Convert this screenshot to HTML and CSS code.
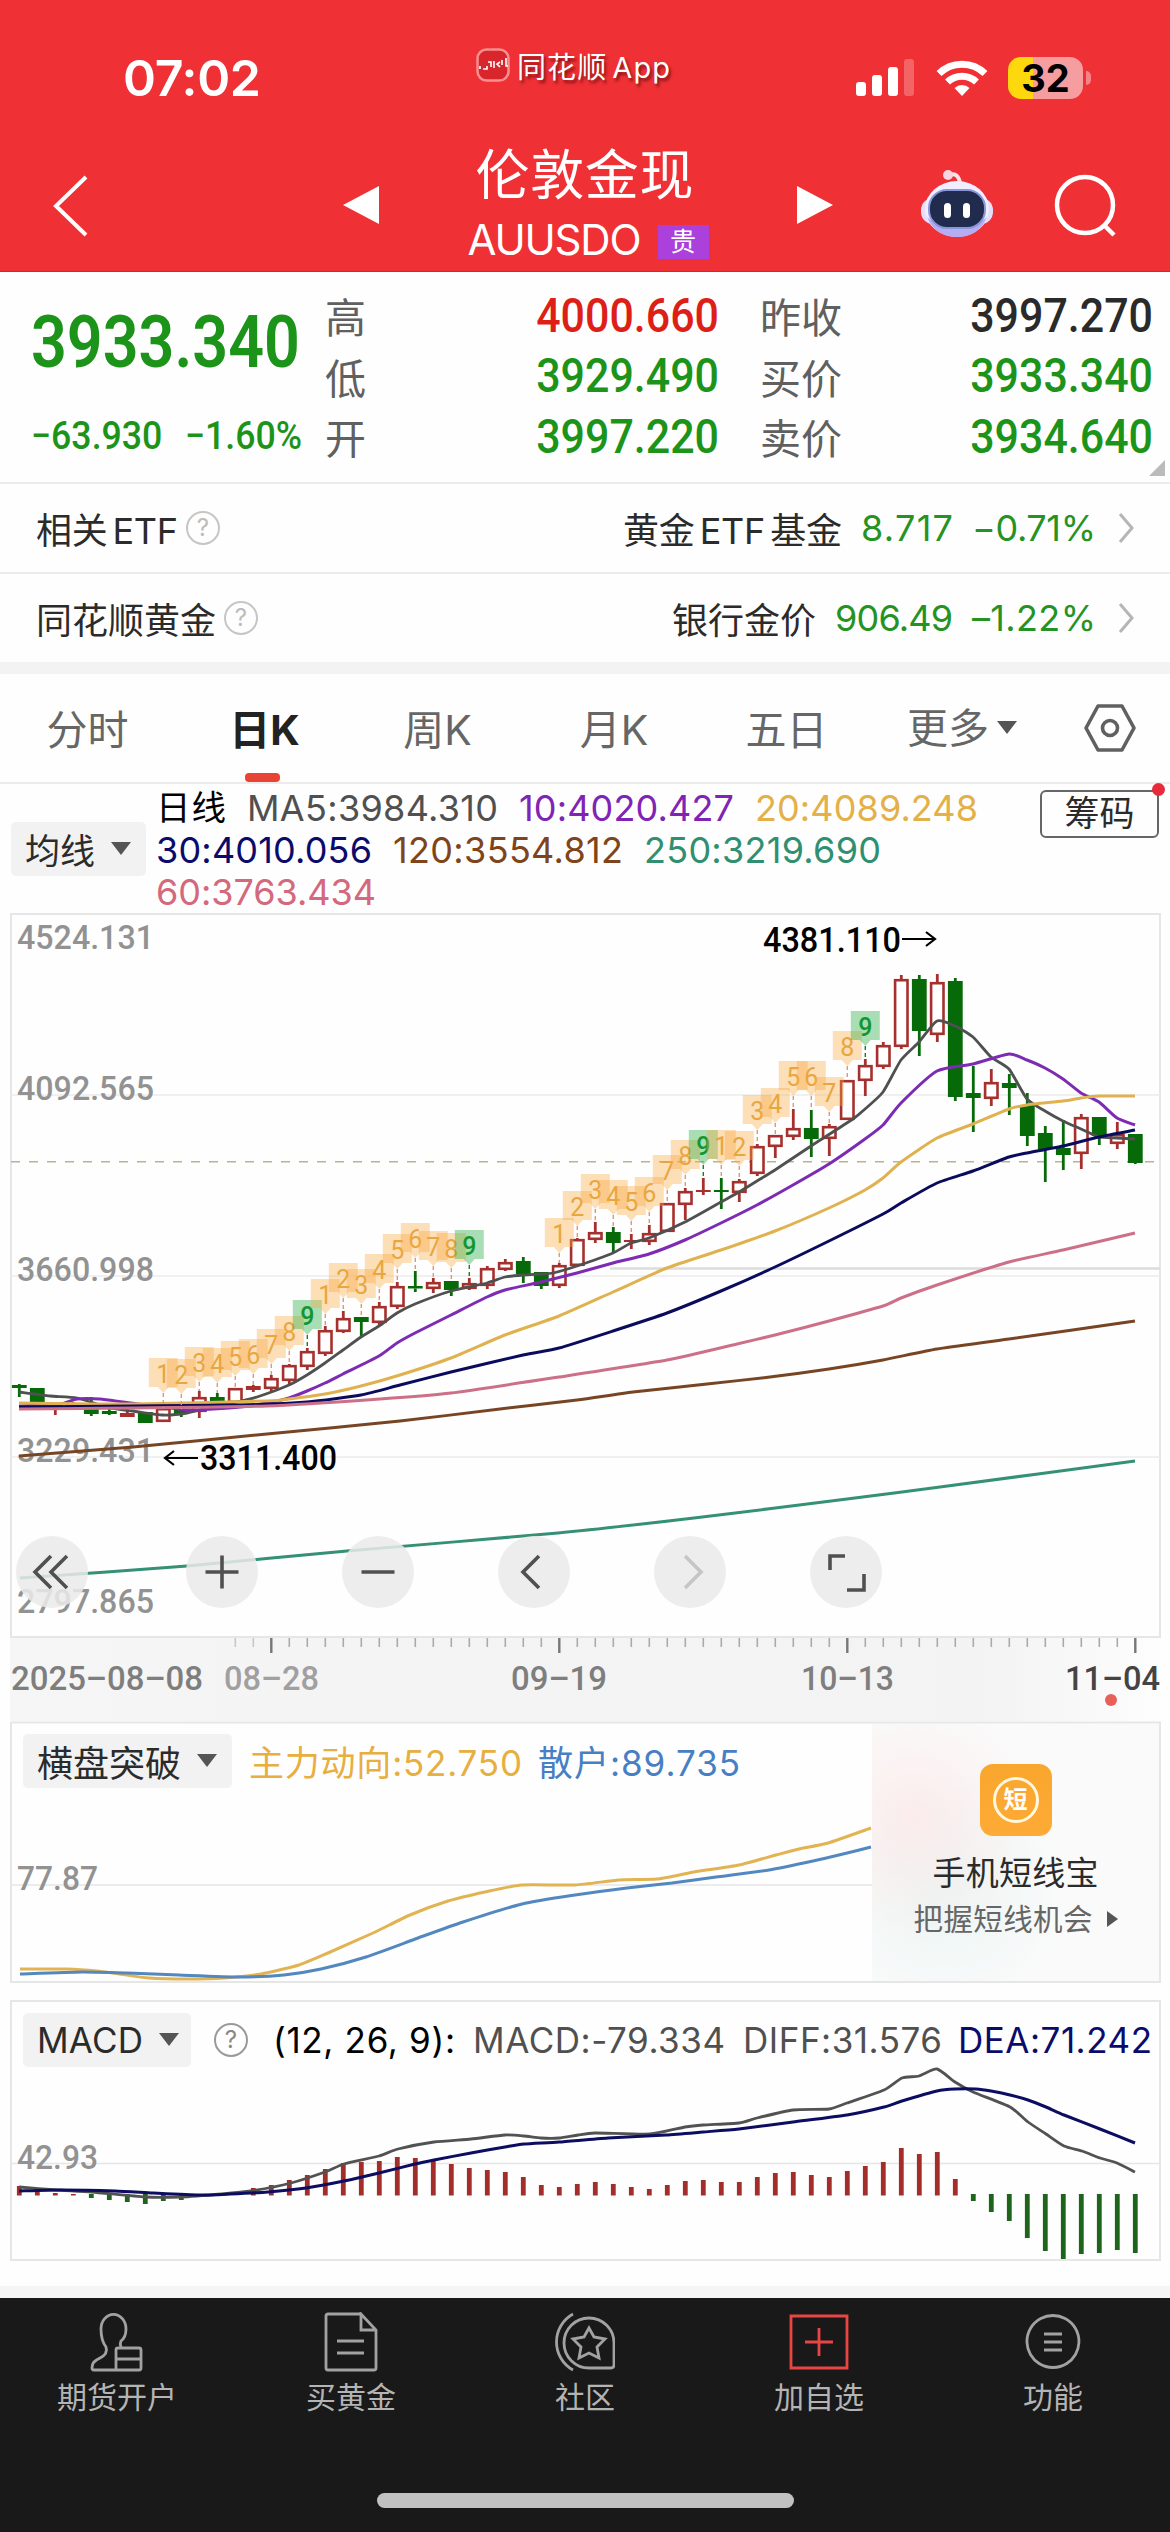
FILE: index.html
```html
<!DOCTYPE html>
<html lang="zh-CN">
<head>
<meta charset="utf-8">
<title>伦敦金现 AUUSDO</title>
<link rel="stylesheet" href="styles.css">
</head>
<body>
<header class="header">
  <div class="status">
    <span class="time" data-w="138">07:02</span>
    <span class="source">
      <svg width="34" height="34" viewBox="0 0 34 34"><rect x="1.5" y="1.5" width="31" height="31" rx="9" fill="#d9262c" stroke="#fa8f90" stroke-width="2.5"/><path d="M4 21v-3M7 21h4v-3M12 14h3v5M18 13v7M24 14l-3 2 3 3M26 12v5M30 10v8h2" fill="none" stroke="#fff" stroke-width="1.6"/></svg>
      <span class="app" data-w="153">同花顺<em>App</em></span>
    </span>
    <svg class="signal" width="60" height="38" viewBox="0 0 60 38" fill="#fff"><rect x="1" y="23" width="10" height="14" rx="3"/><rect x="17" y="16" width="10" height="21" rx="3"/><rect x="33" y="8" width="10" height="29" rx="3"/><rect x="49" y="0" width="10" height="37" rx="3" opacity=".25"/></svg>
    <svg class="wifi" width="52" height="38" viewBox="0 0 52 38" fill="none" stroke="#fff" stroke-width="7"><path d="M3 14.5a33 33 0 0 1 46 0"/><path d="M11.5 23a21 21 0 0 1 29 0"/><path d="M26 37l-7.5-8a11 11 0 0 1 15 0z" fill="#fff" stroke="none"/></svg>
    <div class="battery"><span>32</span></div>
  </div>
  <div class="titlebar">
    <svg class="back" width="36" height="62" viewBox="0 0 36 62"><path d="M33 2L3 31l30 29" fill="none" stroke="#fff" stroke-width="4"/></svg>
    <svg class="prev" width="36" height="40" viewBox="0 0 36 40"><path d="M36 1v38L0 20z" fill="#fff"/></svg>
    <div class="title">
      <h1 data-w="218">伦敦金现</h1>
      <div class="code"><span data-w="174">AUUSDO</span><i>贵</i></div>
    </div>
    <svg class="next" width="36" height="40" viewBox="0 0 36 40"><path d="M0 1v38l36-19z" fill="#fff"/></svg>
    <svg class="robot" width="74" height="70" viewBox="0 0 74 70">
      <path d="M30 6q8-3 10 8" fill="none" stroke="#fbe3ea" stroke-width="4"/><circle cx="28" cy="6" r="5" fill="#f9d5de"/>
      <rect x="1" y="29" width="72" height="26" rx="12" fill="#e4defb"/>
      <ellipse cx="37" cy="40" rx="32" ry="28" fill="#f0eeff"/><path d="M7 48q8 20 30 20t30-20q-12 12-30 12T7 48z" fill="#b6acf3"/>
      <rect x="9" y="21" width="56" height="38" rx="18" fill="#202b4d" stroke="#8796d8" stroke-width="2"/>
      <rect x="24" y="34" width="7" height="15" rx="3.5" fill="#fff"/><rect x="43" y="34" width="7" height="15" rx="3.5" fill="#fff"/>
    </svg>
    <svg class="search" width="64" height="64" viewBox="0 0 64 64" fill="none" stroke="#fff" stroke-width="4.5"><circle cx="31" cy="31" r="28"/><path d="M50 51l10 10"/></svg>
  </div>
</header>

<section class="quote">
  <div class="last">
    <span class="din big">3933.340</span>
    <div class="chg"><span class="din">−63.930</span><span class="din">−1.60%</span></div>
  </div>
  <dl class="c1"><dt>高</dt><dd class="up">4000.660</dd><dt>低</dt><dd>3929.490</dd><dt>开</dt><dd>3997.220</dd></dl>
  <dl class="c2"><dt>昨收</dt><dd class="flat">3997.270</dd><dt>买价</dt><dd>3933.340</dd><dt>卖价</dt><dd>3934.640</dd></dl>
  <i class="corner"></i>
</section>

<div class="row">
  <span data-w="142">相关<em>ETF</em></span><i class="q">?</i>
  <span class="name" data-w="219">黄金<em>ETF</em><em>基金</em></span><b class="v1" data-w="92">8.717</b><b data-w="124">−0.71%</b>
  <svg width="16" height="30" viewBox="0 0 16 30"><path d="M2 1l12 14L2 29" fill="none" stroke="#b5b5b5" stroke-width="3"/></svg>
</div>
<div class="row light">
  <span data-w="180">同花顺黄金</span><i class="q">?</i>
  <span class="name" data-w="144">银行金价</span><b class="v1" data-w="118">906.49</b><b data-w="124">–1.22%</b>
  <svg width="16" height="30" viewBox="0 0 16 30"><path d="M2 1l12 14L2 29" fill="none" stroke="#b5b5b5" stroke-width="3"/></svg>
</div>

<nav class="tabs">
  <a>分时</a><a class="on">日K</a><a>周K</a><a>月K</a><a>五日</a><a>更多<i class="caret"></i></a>
  <svg width="54" height="50" viewBox="0 0 54 50" fill="none" stroke="#606060" stroke-width="3.6"><path d="M15 3h24l12 22-12 22H15L3 25z" stroke-linejoin="round"/><circle cx="27" cy="25" r="7.5"/></svg>
</nav>

<section class="legend">
  <span class="pick">均线<i class="caret"></i></span>
  <div class="ma">
    <div><span class="k day" data-w="70">日线</span><span class="m5" data-w="251">MA5:3984.310</span><span class="m10" data-w="215">10:4020.427</span><span class="m20" data-w="223">20:4089.248</span></div>
    <div><span class="m30" data-w="216">30:4010.056</span><span class="m120" data-w="230">120:3554.812</span><span class="m250" data-w="237">250:3219.690</span></div>
    <div><span class="m60" data-w="220">60:3763.434</span></div>
  </div>
  <span class="chips">筹码<i></i></span>
</section>

<section class="kline">
  <svg id="k" width="1170" height="808" viewBox="0 913 1170 808"></svg>
  <div class="tools">
    <button><svg viewBox="0 0 72 72"><path d="M35 20L19 36l16 16M51 20L35 36l16 16"/></svg></button>
    <button><svg viewBox="0 0 72 72"><path d="M19.5 36h33M36 19.5v33"/></svg></button>
    <button><svg viewBox="0 0 72 72"><path d="M19.5 36h33"/></svg></button>
    <button><svg viewBox="0 0 72 72"><path d="M41 20L25 36l16 16"/></svg></button>
    <button class="off"><svg viewBox="0 0 72 72"><path d="M31 20l16 16-16 16"/></svg></button>
    <button><svg viewBox="0 0 72 72"><path d="M20 34V20h15M37 54h17V38"/></svg></button>
  </div>
</section>

<section class="panel flow">
  <svg id="f" width="1170" height="262" viewBox="0 1721 1170 262"></svg>
  <div class="bar">
    <span class="pick wide">横盘突破<i class="caret"></i></span>
    <span class="gold" data-w="273">主力动向:52.750</span><span class="blue" data-w="202">散户:89.735</span>
  </div>
  <aside class="promo">
    <div class="logo"><span>短</span></div>
    <strong data-w="166">手机短线宝</strong>
    <small><span data-w="179">把握短线机会</span><i></i></small>
  </aside>
</section>

<section class="panel macd">
  <svg id="m" width="1170" height="262" viewBox="0 2000 1170 262"></svg>
  <div class="bar">
    <span class="pick mac"><span data-w="106">MACD</span><i class="caret"></i></span><i class="q dark">?</i>
    <span class="k par" data-w="182">(12, 26, 9):</span><span class="m5" data-w="252">MACD:-79.334</span><span class="m5" data-w="199">DIFF:31.576</span><span class="m30" data-w="194">DEA:71.242</span>
  </div>
</section>

<footer class="dock">
  <div class="items">
    <a><svg viewBox="0 0 60 60"><path d="M34 35c-1-2-1-4 0-6 4-3 5-7 5-12a12 14 0 0 0-25 0c0 8 2 14 5 18 2 6-2 9-6 11-6 3-8 5-8 10q0 2 2 2h25M31 36h21q2 0 2 2v18q0 2-2 2H31q-2 0-2-2V38q0-2 2-2zM29 47h25"/></svg>期货开户</a>
    <a><svg viewBox="0 0 60 60"><path d="M40 2H7q-2 0-2 2v52q0 2 2 2h46q2 0 2-2V18L40 2v16h15M16 29h27M16 41h27"/></svg>买黄金</a>
    <a><svg viewBox="0 0 60 60"><path d="M18 2a32 32 0 0 0 0 56M34 56A25 25 0 1 1 59 31v22q0 3-3 3zM34 16l5 9 11 2-8 8 2 11-10-5-10 5 2-11-8-8 11-2z"/></svg>社区</a>
    <a><svg class="add" viewBox="0 0 60 60"><path d="M2 4h56v52H2zM30 16v28M16 30h28"/></svg>加自选</a>
    <a><svg viewBox="0 0 60 60"><path d="M30 3.5a26 26 0 1 1-.1 0zM21 22h18M21 30h18M21 38h18"/></svg>功能</a>
  </div>
  <div class="home"></div>
</footer>
<script src="charts.js"></script>
</body>
</html>
```
FILE: styles.css
```css
* { box-sizing: border-box; }
body { margin: 0; width: 1170px; height: 2532px; overflow: hidden; background: #fefefe; color: #2b2b2b; font-family: Inter, "Noto Sans CJK SC", sans-serif; display: flex; flex-direction: column; }
svg { display: block; flex: none; }
i, em { font-style: normal; }
em { margin-left: 5px; }
span, h1, b, strong { white-space: nowrap; }
b { font-weight: 400; }
[data-w] { flex: none; }
.header { height: 272px; background: #ef3035; color: #fff; border-bottom: 1px solid #c82a2f; flex: none; }
.status { height: 140px; padding: 16px 0 0 123px; display: flex; align-items: center; }
.time { font-size: 50px; font-weight: 600; }
.source { display: flex; align-items: center; gap: 7px; margin: -27px 0 0 215px; font-size: 29px; text-shadow: 2px 3px 3px rgba(60,0,0,.6); }
.signal { margin-left: 185px; }
.wifi { margin-left: 21px; }
.battery { position: relative; margin-left: 20px; width: 75px; height: 42px; border-radius: 13px; background: linear-gradient(90deg, #fcd80d 33%, #f69da0 33%); color: #000; display: flex; justify-content: center; align-items: center; font: 700 38px Inter, sans-serif; }
.battery::after { content: ""; position: absolute; left: 78px; top: 14px; width: 5px; height: 14px; border-radius: 0 7px 7px 0; background: #f58488; }
.titlebar { height: 131px; padding: 0 52px 0 53px; display: flex; align-items: flex-start; }
.back { margin-top: 35px; }
.prev { margin: 45px 0 0 254px; }
.title { width: 418px; display: flex; flex-direction: column; align-items: center; }
h1 { margin: 3px 0 0 -7px; font-size: 54px; line-height: 66px; font-weight: 400; }
.code { display: flex; gap: 16px; align-items: center; height: 40px; margin-top: 11px; font-size: 42px; line-height: 40px; }
.code i { width: 51px; height: 34px; background: #ac40dc; font-size: 26px; line-height: 33px; text-align: center; margin-top: 3px; }
.next { margin-top: 45px; }
.robot { margin: 29px 0 0 87px; }
.search { margin: 34px 0 0 60px; }

.quote { position: relative; height: 212px; flex: none; display: flex; border-bottom: 2px solid #ececec; font-family: Roboto, "Noto Sans CJK SC", sans-serif; color: #1c9319; }
.din { display: inline-block; transform: scaleX(.915); transform-origin: left; white-space: nowrap; }
.last { width: 325px; padding: 28px 0 0 31px; }
.big { font-size: 72px; line-height: 86px; font-weight: 600; transform: scaleX(.872); }
.chg { display: flex; gap: 10px; font-size: 39px; line-height: 50px; font-weight: 500; margin-top: 25px; }
.quote dl { margin: 0; padding-top: 13px; display: grid; grid-template-columns: auto 1fr; grid-auto-rows: 60.5px; align-items: center; height: 200px; }
.c1 { width: 394px; }
.quote .c2 { width: 393px; margin-left: 41px; }
dt { font-size: 41px; color: #606060; }
dd { margin: 0; text-align: right; font-size: 48px; font-weight: 500; transform: scaleX(.895); transform-origin: right; }
.up { color: #dd1f18; }
.flat { color: #2a2a2a; }
.corner { position: absolute; right: 5px; bottom: 6px; border: 8px solid; border-color: transparent #bbb #bbb transparent; }

.row { height: 89.5px; flex: none; display: flex; align-items: center; padding: 0 36px 0 36px; border-bottom: 2px solid #ececec; font-size: 36px; }
.row b { color: #259323; margin-left: 19px; }
.row svg { margin-left: 22px; }
.name { margin-left: auto; }
.light { border-bottom: 12px solid #f3f3f3; height: 100px; }
.q { width: 34px; height: 34px; border: 2.5px solid #c6c6c6; border-radius: 50%; color: #bcbcbc; font-size: 24px; line-height: 29px; text-align: center; margin-left: 8px; flex: none; }
.tabs { height: 110px; flex: none; display: grid; grid-template-columns: 175px 181px 163px 190px 155px 219px 54px; border-bottom: 2px solid #ececec; font-size: 41px; color: #666; align-items: center; }
.tabs a { text-align: center; position: relative; height: 108px; line-height: 112px; }
.tabs a:nth-child(6) { display: flex; align-items: center; justify-content: center; padding-right: 23px; }
.tabs .on { color: #222; font-weight: 700; padding-right: 2px; }
.on::after { content: ""; position: absolute; left: 70px; bottom: 0; width: 35px; height: 9px; border-radius: 4px; background: #e94335; }
.caret { display: inline-block; border: 10px solid transparent; border-top: 13px solid #555; border-bottom: 0; }
.tabs .caret { margin-left: 8px; }
.legend { height: 129px; flex: none; display: flex; font-size: 36px; }
.pick { background: #f2f2f2; border-radius: 5px; height: 54px; display: flex; align-items: center; padding-left: 14px; gap: 16px; font-size: 35px; width: 135px; }
.legend .pick { margin: 38px 0 0 11px; flex: none; }
.ma { width: 894px; padding-left: 10px; padding-top: 3px; }
.ma div { display: flex; gap: 21px; height: 42px; line-height: 42px; }
.day { font-size: 34.5px; }
.k { color: #000; } .m5 { color: #505050; } .m10 { color: #7f24b4; } .m20 { color: #e4b049; }
.m30 { color: #0b0b6b; } .m120 { color: #7f4419; } .m250 { color: #2f8f70; } .m60 { color: #d4687d; }
.chips { position: relative; flex: none; width: 119px; height: 48px; margin-top: 6px; border: 2px solid #666; border-radius: 6px; text-align: center; line-height: 43px; font-size: 35px; }
.chips i { position: absolute; right: -8px; top: -9px; width: 13px; height: 13px; border-radius: 50%; background: #e92a3a; }

.kline { position: relative; height: 808px; flex: none; }
.tools { position: absolute; left: 16px; top: 623px; display: flex; gap: 84px; }
.tools button { width: 72px; height: 72px; padding: 0; border: 0; border-radius: 50%; background: rgba(234,234,234,.86); }
.tools button:first-child { margin-right: 14px; }
.tools path { fill: none; stroke: #505050; stroke-width: 3.6; }
.tools .off path { stroke: #c5c5c5; }
.chart-num { font-family: Roboto, sans-serif; }

.panel { display: grid; height: 262px; flex: none; }
.panel > * { grid-area: 1 / 1; }
.macd { margin-top: 17px; }
.bar { display: flex; padding: 13px 0 0 23px; height: 67px; align-items: center; font-size: 35px; z-index: 1; }
.wide { width: 209px; margin-right: 17px; font-size: 36px; }
.mac { width: 168px; margin-right: 23px; }
.gold { color: #e7ae40; margin-right: 16px; }
.blue { color: #477fc4; }
.dark { border-color: #999; color: #888; margin: 0; }
.par { margin-left: 25px; }
.macd .m5 { margin-left: 18px; }
.macd .m30 { margin-left: 16px; }
.promo { justify-self: end; width: 287px; height: 257px; margin: 3px 11px 0 0; background: radial-gradient(circle at 15% 38%, rgba(255,225,225,.55), transparent 42%), radial-gradient(circle at 25% 65%, rgba(225,243,240,.6), transparent 45%), #fafafa; display: flex; flex-direction: column; align-items: center; padding: 40px 0 0; }
.logo { width: 72px; height: 72px; border-radius: 13px; background: linear-gradient(#f9a62e, #fdab36); padding: 13px; }
.logo span { display: block; width: 46px; height: 46px; border: 3px solid #fff8dc; border-radius: 50%; color: #fff; font-size: 24px; line-height: 39px; text-align: center; font-weight: 700; }
.promo strong { font-size: 33px; font-weight: 400; line-height: 40px; margin-top: 17px; }
.promo small { font-size: 29.5px; line-height: 40px; color: #666; display: flex; align-items: center; gap: 14px; margin-top: 6px; }
.promo small i { border: 8px solid transparent; border-left: 11px solid #555; border-right: 0; }

.dock { margin-top: 24px; height: 246px; flex: none; border-top: 12px solid #f5f5f5; background: #191919; position: relative; color: #b4b4b4; padding-top: 14px; }
.items { display: grid; grid-template-columns: repeat(5, 1fr); font-size: 30px; line-height: 40px; }
.items a { display: flex; flex-direction: column; align-items: center; gap: 5px; }
.items svg { width: 60px; height: 60px; fill: none; stroke: #a2a2a2; stroke-width: 2.8; }
.items .add { stroke: #e84545; }
.home { width: 417px; height: 15px; border-radius: 8px; background: #c1c1c1; margin: 76px 0 0 377px; }
```
FILE: charts.js
```js
const NS = 'http://www.w3.org/2000/svg';
const X = i => 19.3 + 18 * i;

function add(svg, tag, attrs, text) {
  const e = document.createElementNS(NS, tag);
  for (const k in attrs) e.setAttribute(k, attrs[k]);
  if (text !== undefined) e.textContent = text;
  svg.appendChild(e);
  return e;
}
function hline(svg, x1, x2, y, color, extra) {
  add(svg, 'path', Object.assign({ d: `M${x1} ${y}H${x2}`, stroke: color, 'stroke-width': 1.6 }, extra));
}
function label(svg, x, y, w, str, color, weight, size) {
  add(svg, 'text', { x, y, textLength: w, lengthAdjust: 'spacingAndGlyphs', fill: color, 'font-size': size || 34, 'font-weight': weight || 400, class: 'chart-num' }, str);
}
/* smooth path through points given as "x,y x,y ..." */
function curve(svg, pts, color, width) {
  const p = pts.split(' ').map(s => s.split(',').map(Number));
  let d = `M${p[0]}`;
  for (let i = 0; i < p.length - 1; i++) {
    const a = p[i - 1] || p[i], b = p[i], c = p[i + 1], e = p[i + 2] || c, t = 10;
    d += `C${b[0] + (c[0] - a[0]) / t} ${b[1] + (c[1] - a[1]) / t} ${c[0] - (e[0] - b[0]) / t} ${c[1] - (e[1] - b[1]) / t} ${c[0]} ${c[1]}`;
  }
  add(svg, 'path', { d, fill: 'none', stroke: color, 'stroke-width': width || 3 });
}
function frame(svg, y, h) {
  add(svg, 'rect', { x: 11, y, width: 1149, height: h, fill: 'none', stroke: '#e6e6e6', 'stroke-width': 2 });
}

/* ---------- candles ---------- */
const k = document.getElementById('k');
const defs = add(k, 'defs', {});
defs.innerHTML = '<linearGradient id="ax"><stop offset="0" stop-color="#f6f6f6"/><stop offset=".25" stop-color="#f4f4f4"/><stop offset=".85" stop-color="#f3f3f3"/><stop offset="1" stop-color="#fdfdfd"/></linearGradient>';
add(k, 'rect', { x: 10, y: 1638, width: 1150, height: 83, fill: 'url(#ax)' });
frame(k, 914, 723);
for (const y of [1095, 1276, 1457]) hline(k, 11, 1160, y, '#ebebeb');
hline(k, 610, 1160, 1268.5, '#dcdcdc', { 'stroke-width': 2.6 });
hline(k, 11, 1158, 1161.7, '#b9b391', { 'stroke-dasharray': '9 9' });
[['4524.131', 949], ['4092.565', 1100], ['3660.998', 1281], ['3229.431', 1462], ['2797.865', 1613]]
  .forEach(([s, y]) => label(k, 17, y, 137, s, '#929292', 500));

/* [r|g, body top, body bottom, high, low] */
const C = `g 1385 1388 1384 1397|g 1388 1402 1388 1402|r 1404 1408 1404 1415|r 1405 1407 1402 1410|g 1407 1414 1397 1416|g 1411 1414 1408 1415|r 1413 1417 1409 1417|g 1412 1423 1412 1423|r 1408 1422 1408 1422|g 1409 1414 1409 1417|r 1397 1412 1391 1418|g 1397 1404 1393 1404|r 1388 1403 1388 1403|r 1386 1390 1385 1392|r 1378 1389 1375 1391|r 1365 1381 1364 1385|r 1351 1367 1348 1370|r 1330 1354 1326 1356|r 1318 1332 1311 1333|g 1317 1322 1317 1336|r 1306 1323 1302 1325|r 1286 1307 1282 1309|g 1286 1288.5 1271 1292|r 1282 1289 1278 1293|g 1281 1290 1281 1296|r 1283 1289 1278 1290|r 1268 1286 1266 1289|r 1262 1270 1259 1271|g 1261 1274 1257 1283|g 1272 1286 1272 1289|r 1265 1286 1263 1288|r 1239 1266 1238 1267|r 1232 1240 1222 1243|g 1232 1243 1227 1252|r 1240 1242 1234 1249|r 1233 1242 1225 1245|r 1203 1232 1203 1232|r 1191 1205 1188 1220|r 1190 1192 1178 1195|g 1190 1192 1178 1209|r 1181 1193 1179 1202|r 1146 1174 1144 1176|r 1135 1147 1135 1158|r 1128 1137 1109 1140|g 1128 1139 1110 1157|r 1126 1139 1124 1156|r 1080 1120 1080 1120|r 1065 1081 1059 1096|r 1045 1067 1042 1069|r 979 1047 975 1049|g 979 1031 975 1056|r 982 1035 974 1042|g 981 1097 978 1101|g 1093 1098 1066 1132|r 1082 1099 1069 1106|g 1083 1088 1074 1115|g 1105 1136 1093 1146|g 1133 1149 1126 1182|g 1148 1155 1120 1170|r 1117 1154 1114 1169|g 1117 1136 1117 1145|r 1134 1144 1122 1149|g 1134 1163 1134 1164`
  .split('|').map(s => s.split(' '));
C.forEach(([t, a, b, h, l], i) => {
  const col = t === 'r' ? '#a5302d' : '#066a09', x = X(i), top = +a, bot = +b;
  if (+h < top) add(k, 'path', { d: `M${x} ${h}V${top}`, stroke: col, 'stroke-width': 2.8 });
  if (+l > bot) add(k, 'path', { d: `M${x} ${bot}V${l}`, stroke: col, 'stroke-width': 2.8 });
  if (t === 'r' && bot - top > 5) add(k, 'rect', { x: x - 6.2, y: top + 1.2, width: 12.4, height: bot - top - 2.4, fill: '#fff', stroke: col, 'stroke-width': 2.6 });
  else add(k, 'rect', { x: x - 7.4, y: top, width: 14.8, height: bot - top, fill: col });
});

curve(k, '19,1392 50,1396 77,1398 110,1408 133,1411 163,1415 187,1413 217,1406 237,1402 257,1397 289,1385 307,1375 325,1363 343,1350 361,1337 379,1326 397,1313 415,1304 451,1291 487,1283 505,1277 523,1275 541,1274 553,1273 577,1266 613,1253 631,1243 649,1238 685,1222 721,1202 739,1192 757,1181 775,1170 811,1146 853,1119 865,1109 883,1092 901,1060 919,1042 937,1021 955,1026 973,1037 991,1057 1009,1069 1027,1099 1045,1111 1063,1121 1081,1129 1099,1137 1117,1138 1135,1139', '#4f5151', 2.8);
curve(k, '19,1406 60,1404 77,1399 100,1399 123,1402 147,1405 187,1410 213,1409 240,1407 267,1403 289,1398 307,1391 325,1383 343,1374 379,1356 397,1343 415,1333 451,1315 487,1297 505,1290 541,1282 577,1273 613,1263 649,1254 685,1240 721,1223 757,1205 793,1185 829,1164 865,1139 883,1125 901,1103 937,1071 973,1064 1009,1054 1027,1060 1045,1068 1063,1079 1081,1093 1099,1102 1117,1118 1135,1125', '#7c2bb2');
curve(k, '19,1403 133,1404 267,1401 289,1399 325,1394 361,1386 400,1375 451,1358 505,1335 559,1316 613,1292 667,1268 721,1250 775,1231 829,1208 865,1190 883,1178 901,1162 937,1138 973,1124 1009,1109 1027,1105 1063,1101 1081,1098 1099,1096 1135,1096', '#e0b24f');
curve(k, '19,1407 133,1406 240,1405 307,1402 361,1395 400,1385 451,1372 523,1355 559,1348 613,1331 667,1313 721,1291 775,1267 829,1241 883,1214 901,1203 937,1183 973,1171 1009,1157 1027,1153 1063,1146 1099,1137 1135,1130', '#0b0b5e');
curve(k, '19,1409 133,1408 267,1406 380,1399 451,1393 559,1377 667,1360 737,1344 775,1335 829,1321 883,1306 901,1298 937,1285 1009,1262 1063,1250 1135,1233', '#cc7088');
curve(k, '19,1456 133,1447 267,1434 400,1421 500,1409 577,1400 633,1392 707,1384 770,1377 829,1369 883,1360 937,1349 1009,1339 1135,1321', '#774523');
curve(k, '20,1578 187,1566 347,1551 558,1533 694,1518 847,1499 940,1487 1135,1461', '#359076');

/* sequence markers: [candle, digit, top] */
[[8,1,1358],[9,2,1359],[10,3,1347],[11,4,1348],[12,5,1341],[13,6,1339],[14,7,1329],[15,8,1316],[16,9,1300],[17,1,1279],[18,2,1263],[19,3,1269],[20,4,1254],[21,5,1234],[22,6,1223],[23,7,1231],[24,8,1233],[25,9,1230],[30,1,1218],[31,2,1191],[32,3,1174],[33,4,1180],[34,5,1186],[35,6,1177],[36,7,1155],[37,8,1140],[38,9,1130],[39,1,1130],[40,2,1131],[41,3,1095],[42,4,1088],[43,5,1061],[44,6,1061],[45,7,1077],[46,8,1031],[47,9,1011]]
.forEach(([i, n, y]) => {
  const x = X(i), nine = n === 9;
  add(k, 'path', { d: `M${x - 14.5} ${y}h29v29h-9l-5.5 6l-5.5 -6h-9z`, fill: nine ? '#35b04d' : '#fbab45', opacity: nine ? .42 : .38 });
  add(k, 'path', { d: `M${x} ${y + 35}V${C[i][3]}`, stroke: nine ? '#1d7d2c' : '#d99b78', 'stroke-width': 1.4, 'stroke-dasharray': '4 3' });
  add(k, 'text', { x, y: y + 25, 'text-anchor': 'middle', 'font-size': 25, 'font-weight': nine ? 500 : 400, fill: nine ? '#12962f' : '#e9a63f', class: 'chart-num' }, n);
});

label(k, 763, 952, 138, '4381.110', '#000', 500, 35);
add(k, 'path', { d: 'M902 939H935M926 932l9 7l-9 7', fill: 'none', stroke: '#000', 'stroke-width': 2.2 });
label(k, 200, 1470, 137, '3311.400', '#000', 500, 35);
add(k, 'path', { d: 'M198 1458H166M174 1451l-9 7l9 7', fill: 'none', stroke: '#000', 'stroke-width': 2.2 });

/* time axis */
for (let i = 12; i <= 62; i++) {
  const major = (i - 14) % 16 === 0;
  add(k, 'path', { d: `M${X(i)} 1638V${major ? 1653 : 1647}`, stroke: major ? '#777' : '#aaa', 'stroke-width': major ? 2.4 : 1.6, opacity: i < 14 ? .6 : 1 });
}
label(k, 11, 1690, 192, '2025–08–08', '#7e7e7e', 500);
label(k, 224, 1690, 95, '08–28', '#a0a0a0', 500);
label(k, 511, 1690, 96, '09–19', '#7e7e7e', 500);
label(k, 801, 1690, 93, '10–13', '#7e7e7e', 500);
label(k, 1065, 1690, 95, '11–04', '#444', 500);
add(k, 'circle', { cx: 1111, cy: 1700, r: 6, fill: '#e9605b' });

/* ---------- fund flow ---------- */
const f = document.getElementById('f');
frame(f, 1722.5, 259.5);
hline(f, 11, 872, 1885, '#e6e6e6');
label(f, 17, 1890, 81, '77.87', '#929292', 500);
curve(f, '20,1969 67,1969 97,1971 119,1974 149,1978 187,1979 224,1978 261,1974 299,1965 328,1953 373,1933 410,1915 448,1901 485,1892 522,1885 575,1885 619,1880 657,1879 694,1872 739,1865 776,1855 799,1849 828,1843 871,1828', '#e2b352', 3);
curve(f, '20,1974 82,1972 127,1973 179,1975 239,1977 284,1975 321,1969 366,1957 418,1938 463,1922 522,1904 575,1895 627,1888 672,1883 716,1877 769,1870 813,1861 843,1854 871,1847', '#5288bf', 3);

/* ---------- MACD ---------- */
const m = document.getElementById('m');
frame(m, 2001, 259);
hline(m, 11, 1160, 2163.5, '#e6e6e6');
label(m, 17, 2169, 81, '42.93', '#929292', 500);
const bars = [2186,2190,2193,2194,2198,2200,2202,2204,2201,2200,0,0,0,2188,2185,2180,2175,2169,2163,2162,2161,2157,2158,2160,2164,2168,2170,2172,2177,2185,2187,2184,2182,2184,2187,2189,2185,2181,2180,2182,2182,2177,2173,2172,2175,2177,2171,2166,2162,2148,2154,2152,2179,2201,2212,2221,2238,2251,2259,2254,2253,2250,2253];
bars.forEach((y, i) => {
  if (!y) return;
  const up = y < 2195;
  add(m, 'rect', { x: X(i) - 2.4, y: up ? y : 2194, width: 4.8, height: up ? 2195.5 - y : y - 2194, fill: up ? '#a32d29' : '#1d651b' });
});
curve(m, '19,2187 57,2190 92,2192 145,2197 180,2197 222,2194 251,2191 291,2183 325,2172 344,2164 379,2156 398,2149 434,2142 471,2139 505,2135 524,2136 541,2138 559,2138 578,2135 595,2133 650,2134 685,2127 703,2125 739,2123 757,2118 793,2110 829,2109 847,2103 884,2090 902,2078 919,2076 937,2069 955,2082 973,2092 1010,2107 1028,2122 1046,2134 1064,2146 1082,2151 1100,2158 1117,2163 1135,2172', '#525252', 2.8);
curve(m, '19,2191 61,2190 115,2191 153,2193 199,2195 230,2194 268,2192 306,2188 344,2181 379,2173 415,2164 434,2160 471,2153 505,2147 524,2144 559,2142 608,2138 666,2135 703,2132 739,2129 793,2122 847,2115 884,2107 902,2101 937,2091 955,2089 976,2089 991,2091 1010,2095 1028,2100 1046,2107 1064,2115 1100,2129 1135,2143', '#0c0c60', 3);

/* track labels out to their column width */
document.querySelectorAll('[data-w]').forEach(e => {
  const w = +e.dataset.w;
  const r = document.createRange();
  r.selectNodeContents(e);
  const ls = (w - r.getBoundingClientRect().width) / (e.textContent.length - 1);
  e.style.letterSpacing = ls.toFixed(3) + 'px';
  e.style.width = w + 'px';
});
```
